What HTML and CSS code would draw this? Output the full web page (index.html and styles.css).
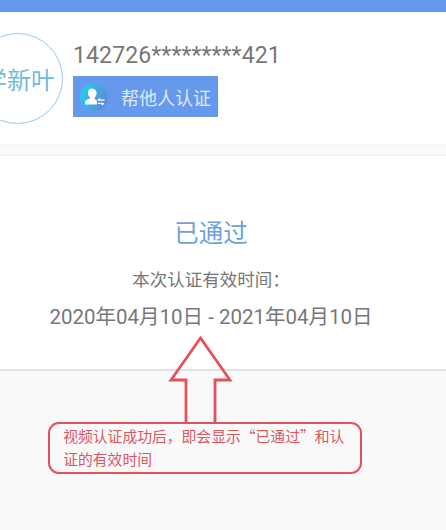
FILE: index.html
```html
<!DOCTYPE html>
<html lang="zh">
<head>
<meta charset="utf-8">
<title>认证结果</title>
<link rel="stylesheet" href="styles.css">
</head>
<body>
<header class="topbar"></header>
<section class="profile">
  <div class="avatar"><span>学新叶</span></div>
  <div class="info">
    <div class="idnum">142726*********421</div>
    <div class="helpbtn">
      <svg class="helpicon" viewBox="0 0 28 28" width="28" height="28">
        <defs>
          <linearGradient id="g" x1="0" y1="0" x2="1" y2="0.4">
            <stop offset="0" stop-color="#22d3ee"/>
            <stop offset="1" stop-color="#5b8fd8"/>
          </linearGradient>
        </defs>
        <circle cx="14" cy="14" r="14" fill="url(#g)"/>
        <path d="M12 5.5c3 0 4.6 2.2 4.6 4.8 0 1.9-.9 3.5-2 4.4v1.2c.8.5 1.6.9 2.3 1.3v4.3H5v-2.2c0-1.3 1-2.2 2.4-2.8l2.6-1v-1.3c-1.2-.9-2.1-2.5-2.1-4.3 0-2.3 1.5-4.4 4.1-4.4z" fill="#fff"/>
        <path d="M18 17.2h6.5M20 15.4l-2 1.8M23.5 20.3H17.6M21.8 22l2-1.7" stroke="#fff" stroke-width="1.3" fill="none"/>
      </svg>
      <span>帮他人认证</span>
    </div>
  </div>
</section>
<section class="result">
  <h1 class="status">已通过</h1>
  <p class="label">本次认证有效时间：</p>
  <p class="dates">2020年04月10日 - 2021年04月10日</p>
</section>
<svg class="arrow" viewBox="0 0 66 88" width="66" height="88">
  <path d="M18 86V44H3L32.5 2 62 44H47V86" fill="none" stroke="#e2525c" stroke-width="2.8"/>
</svg>
<aside class="note">视频认证成功后，即会显示“已通过”和认证的有效时间</aside>
</body>
</html>
```
FILE: styles.css
```css
html, body { margin: 0; padding: 0; }
body {
  position: relative;
  width: 446px;
  height: 530px;
  overflow: hidden;
  background: #f9f9f9;
  font-family: Roboto, "Noto Sans CJK SC", sans-serif;
  color: #757575;
}
.topbar { height: 12px; background: #6699ec; }
.profile {
  display: flex;
  align-items: flex-start;
  height: 132px;
  background: #fff;
  border-bottom: 1px solid #f4f4f4;
  overflow: hidden;
  position: relative;
}
.avatar {
  flex: none;
  box-sizing: border-box;
  width: 91px;
  height: 91px;
  margin: 21px 0 0 -28px;
  border: 1.5px solid #9cc6ea;
  border-radius: 50%;
  display: flex;
  align-items: center;
  justify-content: center;
  padding-left: 3px;
  color: #72bcd8;
  font-size: 24px;
  white-space: nowrap;
}
.info { margin: 31px 0 0 10px; }
.idnum { font-size: 23px; line-height: 26px; letter-spacing: 0.13px; color: #777; }
.helpbtn {
  display: flex;
  align-items: center;
  width: 145px;
  height: 41px;
  margin-top: 7px;
  background: #6699ec;
  box-sizing: border-box;
  padding-left: 7px;
}
.helpicon { flex: none; }
.helpbtn span {
  margin-left: 13px;
  color: #dfeafb;
  font-size: 18px;
  white-space: nowrap;
}
.result {
  margin-top: 10px;
  height: 216px;
  background: #fff;
  border-top: 1px solid #f0f0f0;
  border-bottom: 2px solid #e2e2e2;
  box-sizing: border-box;
  text-align: center;
  padding: 61px 24px 0 0;
}
.status { margin: 0; font-size: 24.5px; line-height: 34px; font-weight: 400; color: #6f9fdc; }
.label { margin: 17px 0 0; font-size: 17.5px; line-height: 24px; color: #777; }
.dates { margin: 11px 0 0; font-size: 20.5px; line-height: 28px; color: #777; white-space: nowrap; }
.arrow { position: absolute; left: 168px; top: 336px; }
.note {
  position: absolute;
  left: 48px;
  top: 422px;
  box-sizing: border-box;
  width: 314px;
  height: 52px;
  border: 2.8px solid #e2525c;
  border-radius: 11px;
  padding: 0 8px 0 13.2px;
  font-family: "Noto Sans CJK SC", sans-serif;
  font-size: 14.8px;
  line-height: 23px;
  color: #d9575f;
}
```
